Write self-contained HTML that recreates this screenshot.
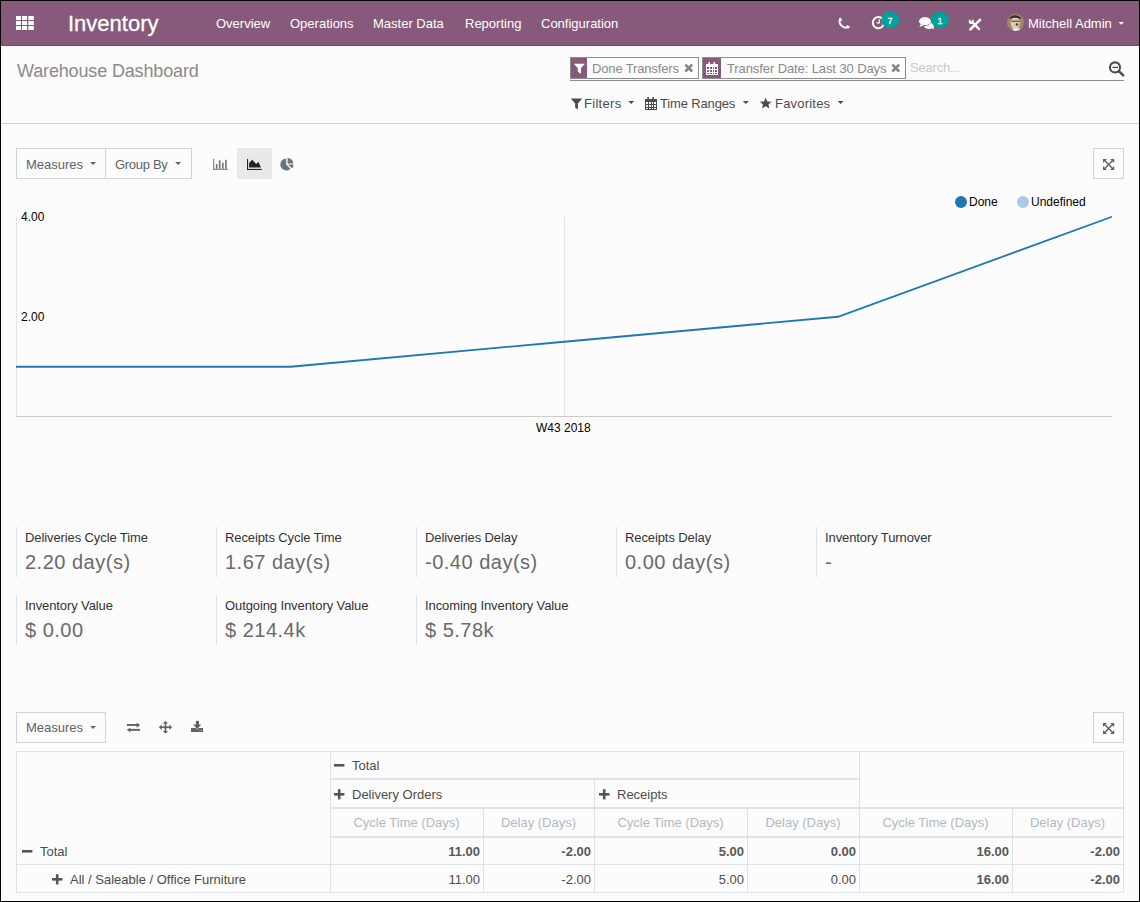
<!DOCTYPE html>
<html><head><meta charset="utf-8">
<style>
*{box-sizing:border-box;margin:0;padding:0}
html,body{width:1140px;height:902px;overflow:hidden;background:#fcfcfc}
body{font-family:"Liberation Sans",sans-serif;font-size:13px;color:#4c4c4c;position:relative}
.frame{position:absolute;left:0;top:0;width:1140px;height:902px;overflow:hidden}
.border{position:absolute;left:0;top:0;width:1140px;height:902px;border:1px solid #000;z-index:99}
.border2{position:absolute;left:1px;top:1px;width:1138px;height:900px;border:1px solid rgba(255,255,255,0.09);z-index:98}
.abs{position:absolute;white-space:nowrap}
.nav{position:absolute;left:0;top:0;width:1140px;height:46px;background:#875a7b;border-bottom:1px solid #6f4a66}
.nav .t{color:#fff;font-size:13px}
.cp{position:absolute;left:0;top:46px;width:1140px;height:78px;background:#fcfcfc;border-bottom:1px solid #cfcfcf}
svg{position:absolute;overflow:visible}
.btn{position:absolute;border:1px solid #ced4da;background:#fcfcfc;height:31px}
.kpi{position:absolute;width:200px;height:50px;border-left:1px solid #dde3ea}
.kpi .l{position:absolute;left:8px;top:3px;font-size:13px;color:#333;white-space:nowrap;letter-spacing:-0.1px}
.kpi .v{position:absolute;left:8px;top:24px;font-size:20px;color:#6a6a6a;white-space:nowrap;letter-spacing:0.5px}
</style></head>
<body>
<div class="frame">
  <!-- NAVBAR -->
  <div class="nav">
    <svg style="left:0;top:0" width="60" height="46">
      <g fill="#fff">
        <rect x="16" y="16" width="5" height="4"/><rect x="22" y="16" width="5.1" height="4"/><rect x="28.3" y="16" width="5.5" height="4"/>
        <rect x="16" y="21" width="5" height="4"/><rect x="22" y="21" width="5.1" height="4"/><rect x="28.3" y="21" width="5.5" height="4"/>
        <rect x="16" y="26" width="5" height="4"/><rect x="22" y="26" width="5.1" height="4"/><rect x="28.3" y="26" width="5.5" height="4"/>
      </g>
    </svg>
    <div class="abs t" style="left:68px;top:11px;font-size:22px;-webkit-text-stroke:0.3px #fff">Inventory</div>
    <div class="abs t" style="left:216px;top:16px">Overview</div>
    <div class="abs t" style="left:290px;top:16px">Operations</div>
    <div class="abs t" style="left:373px;top:16px">Master Data</div>
    <div class="abs t" style="left:465px;top:16px">Reporting</div>
    <div class="abs t" style="left:541px;top:16px">Configuration</div>
    <div class="abs t" style="left:1028px;top:16px">Mitchell Admin</div>

    <svg style="left:0;top:0" width="1140" height="46">
      <!-- phone -->
      <path d="M839.9,18.9 C839,22 839.8,25.4 843.8,27.1 C845.8,27.9 847.3,27.7 848.5,26.9" fill="none" stroke="#fff" stroke-width="1.9" stroke-linecap="round"/>
      <path d="M838.9,18.4 L840.6,17.4 L842.3,20.2 L840.4,21.6 Z" fill="#fff"/>
      <path d="M846.1,25.9 L847.6,24.9 L849.9,27.2 L848.3,28.4 Z" fill="#fff"/>
      <!-- clock -->
      <circle cx="878.4" cy="22.7" r="5.6" fill="none" stroke="#fff" stroke-width="2"/>
      <path d="M879.3,19.3 V22.9 H876.6" fill="none" stroke="#fff" stroke-width="1.1"/>
      <ellipse cx="890.3" cy="20" rx="8.9" ry="8.3" fill="#00a09d"/>
      <!-- chat -->
      <ellipse cx="929" cy="25.6" rx="5" ry="3.4" fill="#fff"/>
      <path d="M931,27.5 L934.2,29.6 L933.3,26.2 Z" fill="#fff"/>
      <ellipse cx="925" cy="21.2" rx="6.1" ry="4.3" fill="#fff" stroke="#875a7b" stroke-width="0.9"/>
      <path d="M920.6,24.2 L919.4,27 L923.6,25.2 Z" fill="#fff"/>
      <ellipse cx="925" cy="21.2" rx="5.7" ry="3.9" fill="#fff"/>
      <ellipse cx="940" cy="20" rx="8.9" ry="8.3" fill="#00a09d"/>
      <!-- tools -->
      <path d="M970.4,29.4 L980,19.9" stroke="#fff" stroke-width="2.7" stroke-linecap="round"/>
      <path d="M972.8,22.8 L979.1,29.1" stroke="#fff" stroke-width="2.2" stroke-linecap="round"/>
      <circle cx="971.3" cy="21.5" r="2.6" fill="#fff"/><path d="M970,18.2 L972.6,18.2 L972,21.3 L970.6,21.3 Z" fill="#875a7b"/>
      <!-- avatar -->
      <defs><clipPath id="avc"><circle cx="1015.5" cy="22.5" r="8.5"/></clipPath></defs>
      <g clip-path="url(#avc)">
        <rect x="1006" y="13" width="19" height="19" fill="#a3876a"/>
        <ellipse cx="1015.3" cy="23" rx="4.6" ry="6.5" fill="#dcc8bd"/>
        <path d="M1009.5,17.5 Q1015,13 1021,17.5 L1020.5,19 Q1015,16.5 1010,19 Z" fill="#3a2a25"/>
        <path d="M1011.5,21.2 H1019.5" stroke="#4a3030" stroke-width="1"/>
        <ellipse cx="1017" cy="24.5" rx="1.3" ry="1.2" fill="#6a3a3a"/>
        <ellipse cx="1016.5" cy="30" rx="4" ry="2" fill="#e6e6ea"/>
      </g>
      <!-- caret -->
      <path d="M1118.5,22 H1124 L1121.25,24.8 Z" fill="#fff"/>
    </svg>
    <div class="abs" style="left:887.5px;top:15.5px;font-size:9px;color:#fff;-webkit-text-stroke:0.3px #fff">7</div>
    <div class="abs" style="left:937.5px;top:15.5px;font-size:9px;color:#fff;-webkit-text-stroke:0.3px #fff">1</div>
  </div>
  <!-- CONTROL PANEL -->
  <div class="cp">
    <div class="abs" style="left:17px;top:15px;font-size:18px;color:#8a8a8a;letter-spacing:-0.15px">Warehouse Dashboard</div>
  </div>

  <!-- facets (page coords) -->
  <div class="abs" style="left:570px;top:57px;width:129px;height:22px;border:1px solid #8c8c8c;background:#fcfcfc"></div>
  <div class="abs" style="left:571px;top:58px;width:16px;height:20px;background:#875a7b"></div>
  <div class="abs" style="left:592px;top:61px;color:#8a8a8a;font-size:13px;letter-spacing:-0.15px">Done Transfers</div>
  <div class="abs" style="left:702px;top:57px;width:204px;height:22px;border:1px solid #8c8c8c;background:#fcfcfc"></div>
  <div class="abs" style="left:703px;top:58px;width:18px;height:20px;background:#875a7b"></div>
  <div class="abs" style="left:727px;top:61px;color:#8a8a8a;font-size:13px;letter-spacing:-0.1px">Transfer Date: Last 30 Days</div>
  <div class="abs" style="left:910px;top:60px;color:#c8c8c8;font-size:13px;letter-spacing:-0.2px">Search...</div>
  <div class="abs" style="left:570px;top:80px;width:554px;height:1px;background:#8c8c8c"></div>
  <svg style="left:0;top:0" width="1140" height="130">
    <!-- filter icon in facet 1 -->
    <path d="M573.7,63.7 H585 L581,68 V74 L577.8,71.5 V68 Z" fill="#fff"/>
    <!-- x icons -->
    <path d="M685.3,64.6 L692.2,71.5 M692.2,64.6 L685.3,71.5" stroke="#858585" stroke-width="2.6"/>
    <path d="M892.3,64.6 L899.2,71.5 M899.2,64.6 L892.3,71.5" stroke="#858585" stroke-width="2.6"/>
    <!-- calendar in facet 2 -->
    <rect x="706" y="64" width="12" height="11" fill="#fff"/>
    <g fill="#875a7b">
      <rect x="707" y="67" width="2" height="2"/><rect x="710" y="67" width="2" height="2"/><rect x="713" y="67" width="1" height="2"/><rect x="715" y="67" width="2" height="2"/>
      <rect x="707" y="70" width="2" height="2"/><rect x="710" y="70" width="2" height="2"/><rect x="713" y="70" width="1" height="2"/><rect x="715" y="70" width="2" height="2"/>
      <rect x="707" y="73" width="2" height="1"/><rect x="710" y="73" width="2" height="1"/><rect x="713" y="73" width="1" height="1"/><rect x="715" y="73" width="2" height="1"/>
    </g>
    <g fill="#fff"><rect x="708.5" y="62" width="1.6" height="2.5"/><rect x="713.5" y="62" width="1.6" height="2.5"/></g>
    <!-- search minus icon -->
    <circle cx="1115" cy="67.4" r="5" fill="none" stroke="#4c4c4c" stroke-width="2.1"/>
    <path d="M1118.8,71.2 L1123.2,75.4" stroke="#4c4c4c" stroke-width="2.5" stroke-linecap="round"/>
    <path d="M1112.4,67.4 H1118" stroke="#4c4c4c" stroke-width="1.3"/>
    <!-- filters row icons -->
    <path d="M570.8,98.6 H582.2 L577.9,103.6 V109.5 L575.1,107.5 V103.6 Z" fill="#4c4c4c"/>
    <path d="M628.2,100.9 H634.2 L631.2,103.9 Z" fill="#4c4c4c"/>
    <rect x="645" y="99" width="12" height="11" fill="#4c4c4c"/>
    <g fill="#fcfcfc">
      <rect x="646" y="102" width="2" height="2"/><rect x="649" y="102" width="2" height="2"/><rect x="652" y="102" width="1" height="2"/><rect x="654" y="102" width="2" height="2"/>
      <rect x="646" y="105" width="2" height="2"/><rect x="649" y="105" width="2" height="2"/><rect x="652" y="105" width="1" height="2"/><rect x="654" y="105" width="2" height="2"/>
      <rect x="646" y="108" width="2" height="1"/><rect x="649" y="108" width="2" height="1"/><rect x="652" y="108" width="1" height="1"/><rect x="654" y="108" width="2" height="1"/>
    </g>
    <g fill="#4c4c4c"><rect x="647.3" y="97" width="1.6" height="2.5"/><rect x="652.3" y="97" width="1.6" height="2.5"/></g>
    <path d="M742.8,100.9 H748.8 L745.8,103.9 Z" fill="#4c4c4c"/>
    <path d="M765.7,97.6 L767.3,101.4 L771.6,101.7 L768.4,104.4 L769.4,108.6 L765.7,106.3 L762,108.6 L763,104.4 L759.8,101.7 L764.1,101.4 Z" fill="#4c4c4c"/>
    <path d="M837.6,100.9 H843.6 L840.6,103.9 Z" fill="#4c4c4c"/>
  </svg>
  <div class="abs" style="left:584px;top:96px;font-size:13px;color:#4c4c4c;letter-spacing:0.3px">Filters</div>
  <div class="abs" style="left:660px;top:96px;font-size:13px;color:#4c4c4c;letter-spacing:-0.15px">Time Ranges</div>
  <div class="abs" style="left:775px;top:96px;font-size:13px;color:#4c4c4c;letter-spacing:0.2px">Favorites</div>

  <!-- CHART SECTION -->
  <div class="btn" style="left:16px;top:148px;width:90px;height:31px"></div>
  <div class="btn" style="left:105px;top:148px;width:87px;height:31px"></div>
  <div class="abs" style="left:26px;top:157px;font-size:13px;color:#5f6368">Measures</div>
  <div class="abs" style="left:115px;top:157px;font-size:13px;color:#5f6368;letter-spacing:-0.3px">Group By</div>
  <div class="abs" style="left:237px;top:148px;width:35px;height:31px;background:#e9e9e9"></div>
  <div class="btn" style="left:1093px;top:148px;width:31px;height:31px"></div>
  <svg style="left:0;top:0" width="1140" height="902">
    <path d="M90.2,162.1 H96 L93.1,165 Z" fill="#5f6368"/>
    <path d="M175.2,162.1 H181 L178.1,165 Z" fill="#5f6368"/>
    <!-- bar chart icon -->
    <g fill="#6c757d">
      <rect x="213.2" y="158.8" width="1" height="11"/><rect x="213.2" y="168.8" width="14.8" height="1"/>
      <rect x="215.9" y="164.1" width="1.6" height="4.7"/><rect x="218.9" y="160.3" width="1.6" height="8.5"/><rect x="222" y="162.7" width="1.6" height="6.1"/><rect x="225.1" y="159.8" width="1.6" height="9"/>
    </g>
    <!-- area chart icon -->
    <g fill="#212529">
      <rect x="247" y="158.9" width="1.1" height="11.1"/><rect x="247" y="168.9" width="14.8" height="1.1"/>
      <path d="M249.1,167.6 V162.9 L252.2,159.8 L256.2,164 L258.5,161.8 L260.9,167.6 Z"/>
    </g>
    <!-- pie icon -->
    <path d="M286.2,158.6 A5.9,5.9 0 1 0 290.4,168.7 L286.2,164.5 Z" fill="#6c757d"/>
    <path d="M287.6,157.9 A5.6,5.6 0 0 1 293.2,163.5 L287.6,163.5 Z" fill="#6c757d"/>
    <path d="M293.6,164.6 A5.6,5.6 0 0 1 292.1,168.4 L288.1,164.6 Z" fill="#6c757d"/>
    <!-- expand icon -->
    <g fill="none" stroke="#5f6368" stroke-width="1.4">
      <path d="M1104.2,160.1 L1113,168.9 M1113,160.1 L1104.2,168.9"/>
    </g>
    <g fill="#5f6368">
      <path d="M1103,158.9 H1107 L1103,162.9 Z"/><path d="M1114.2,158.9 H1110.2 L1114.2,162.9 Z"/>
      <path d="M1103,170.1 H1107 L1103,166.1 Z"/><path d="M1114.2,170.1 H1110.2 L1114.2,166.1 Z"/>
    </g>
    <!-- legend -->
    <circle cx="961" cy="202" r="5" fill="#1f77b4" stroke="#1f77b4" stroke-width="2"/>
    <circle cx="1023" cy="202" r="5" fill="#aec7e8" stroke="#aec7e8" stroke-width="2"/>
    <!-- axes -->
    <rect x="16" y="216.5" width="1" height="200" fill="#e5e5e5"/>
    <rect x="564" y="216.5" width="1" height="200" fill="#e5e5e5"/>
    <rect x="16" y="416" width="1096" height="1" fill="#cccccc"/>
    <polyline points="16,366.75 290.5,366.75 564.3,341.75 838,316.75 1112,216.75" fill="none" stroke="#1f77b4" stroke-width="1.8"/>
  </svg>
  <div class="abs" style="left:969px;top:195px;font-size:12px;color:#000">Done</div>
  <div class="abs" style="left:1031px;top:195px;font-size:12px;color:#000">Undefined</div>
  <div class="abs" style="left:21px;top:210px;font-size:12px;color:#000">4.00</div>
  <div class="abs" style="left:21px;top:310px;font-size:12px;color:#000">2.00</div>
  <div class="abs" style="left:536px;top:421px;font-size:12px;color:#000">W43 2018</div>

  <!-- KPIs -->
  <div class="kpi" style="left:16px;top:527px"><div class="l">Deliveries Cycle Time</div><div class="v">2.20 day(s)</div></div>
  <div class="kpi" style="left:216px;top:527px"><div class="l">Receipts Cycle Time</div><div class="v">1.67 day(s)</div></div>
  <div class="kpi" style="left:416px;top:527px"><div class="l">Deliveries Delay</div><div class="v">-0.40 day(s)</div></div>
  <div class="kpi" style="left:616px;top:527px"><div class="l">Receipts Delay</div><div class="v">0.00 day(s)</div></div>
  <div class="kpi" style="left:816px;top:527px"><div class="l">Inventory Turnover</div><div class="v">-</div></div>
  <div class="kpi" style="left:16px;top:595px"><div class="l">Inventory Value</div><div class="v">$ 0.00</div></div>
  <div class="kpi" style="left:216px;top:595px"><div class="l">Outgoing Inventory Value</div><div class="v">$ 214.4k</div></div>
  <div class="kpi" style="left:416px;top:595px"><div class="l">Incoming Inventory Value</div><div class="v">$ 5.78k</div></div>

  <!-- PIVOT -->
  <div class="btn" style="left:16px;top:712px;width:90px;height:31px"></div>
  <div class="abs" style="left:26px;top:720px;font-size:13px;color:#5f6368">Measures</div>
  <div class="btn" style="left:1093px;top:712px;width:31px;height:31px"></div>
  <div class="abs" style="left:16px;top:751px;width:1108px;height:142px;background:#fcfcfc"></div>
  <div class="abs" style="left:16px;top:751px;width:1108px;height:1px;background:#dee2e6"></div>
  <div class="abs" style="left:330px;top:778px;width:530px;height:2px;background:#dee2e6"></div>
  <div class="abs" style="left:859px;top:807px;width:265px;height:2px;background:#dee2e6"></div>
  <div class="abs" style="left:330px;top:807px;width:530px;height:2px;background:#dee2e6"></div>
  <div class="abs" style="left:330px;top:836px;width:794px;height:2px;background:#dee2e6"></div>
  <div class="abs" style="left:16px;top:864px;width:1108px;height:1px;background:#dee2e6"></div>
  <div class="abs" style="left:16px;top:892px;width:1108px;height:1px;background:#dee2e6"></div>
  <div class="abs" style="left:16px;top:751px;width:1px;height:142px;background:#dee2e6"></div>
  <div class="abs" style="left:330px;top:751px;width:1px;height:142px;background:#dee2e6"></div>
  <div class="abs" style="left:859px;top:751px;width:1px;height:142px;background:#dee2e6"></div>
  <div class="abs" style="left:1123px;top:751px;width:1px;height:142px;background:#dee2e6"></div>
  <div class="abs" style="left:594px;top:779px;width:1px;height:114px;background:#dee2e6"></div>
  <div class="abs" style="left:483px;top:808px;width:1px;height:85px;background:#dee2e6"></div>
  <div class="abs" style="left:747px;top:808px;width:1px;height:85px;background:#dee2e6"></div>
  <div class="abs" style="left:1012px;top:808px;width:1px;height:85px;background:#dee2e6"></div>
  <div class="abs" style="left:352px;top:758px;">Total</div>
  <div class="abs" style="left:352px;top:787px;">Delivery Orders</div>
  <div class="abs" style="left:617px;top:787px;">Receipts</div>
  <div class="abs" style="left:40px;top:844px;">Total</div>
  <div class="abs" style="left:70px;top:872px;">All / Saleable / Office Furniture</div>
  <div class="abs" style="left:330px;top:815px;width:153px;text-align:center;color:#b3b9c0">Cycle Time (Days)</div>
  <div class="abs" style="left:483px;top:815px;width:111px;text-align:center;color:#b3b9c0">Delay (Days)</div>
  <div class="abs" style="left:594px;top:815px;width:153px;text-align:center;color:#b3b9c0">Cycle Time (Days)</div>
  <div class="abs" style="left:747px;top:815px;width:112px;text-align:center;color:#b3b9c0">Delay (Days)</div>
  <div class="abs" style="left:859px;top:815px;width:153px;text-align:center;color:#b3b9c0">Cycle Time (Days)</div>
  <div class="abs" style="left:1012px;top:815px;width:111px;text-align:center;color:#b3b9c0">Delay (Days)</div>
  <div class="abs" style="left:364px;top:844px;width:116px;text-align:right;font-weight:bold;color:#585858">11.00</div>
  <div class="abs" style="left:364px;top:872px;width:116px;text-align:right">11.00</div>
  <div class="abs" style="left:475px;top:844px;width:116px;text-align:right;font-weight:bold;color:#585858">-2.00</div>
  <div class="abs" style="left:475px;top:872px;width:116px;text-align:right">-2.00</div>
  <div class="abs" style="left:628px;top:844px;width:116px;text-align:right;font-weight:bold;color:#585858">5.00</div>
  <div class="abs" style="left:628px;top:872px;width:116px;text-align:right">5.00</div>
  <div class="abs" style="left:740px;top:844px;width:116px;text-align:right;font-weight:bold;color:#585858">0.00</div>
  <div class="abs" style="left:740px;top:872px;width:116px;text-align:right">0.00</div>
  <div class="abs" style="left:893px;top:844px;width:116px;text-align:right;font-weight:bold;color:#585858">16.00</div>
  <div class="abs" style="left:893px;top:872px;width:116px;text-align:right;font-weight:bold;color:#585858">16.00</div>
  <div class="abs" style="left:1004px;top:844px;width:116px;text-align:right;font-weight:bold;color:#585858">-2.00</div>
  <div class="abs" style="left:1004px;top:872px;width:116px;text-align:right;font-weight:bold;color:#585858">-2.00</div>
  <svg style="left:0;top:0" width="1140" height="902">
    <rect x="334" y="764" width="10.4" height="2.6" fill="#555"/>
    <rect x="334" y="793" width="10.4" height="2.6" fill="#555"/><rect x="337.9" y="789.2" width="2.6" height="10.2" fill="#555"/>
    <rect x="599" y="793" width="10.4" height="2.6" fill="#555"/><rect x="602.9" y="789.2" width="2.6" height="10.2" fill="#555"/>
    <rect x="22" y="850" width="10.4" height="2.6" fill="#555"/>
    <rect x="52" y="878" width="10.4" height="2.6" fill="#555"/><rect x="55.9" y="874.2" width="2.6" height="10.2" fill="#555"/>
    <path d="M90.2,726.1 H96 L93.1,729 Z" fill="#5f6368"/>
    <!-- swap -->
    <g fill="#5f6368">
      <rect x="126.9" y="724" width="10.5" height="1.9"/><path d="M136.6,722.8 L140.2,724.95 L136.6,727.7 Z"/>
      <rect x="129.6" y="728.9" width="10.5" height="1.9"/><path d="M130.4,727.8 L126.8,729.85 L130.4,732.6 Z"/>
    </g>
    <!-- move -->
    <g fill="#5f6368">
      <rect x="160" y="726.4" width="11" height="1.7"/><rect x="164.6" y="722" width="1.7" height="10.6"/>
      <path d="M158.9,727.25 L161.6,724.6 V729.9 Z"/><path d="M172.1,727.25 L169.4,724.6 V729.9 Z"/>
      <path d="M165.45,720.9 L162.8,723.6 H168.1 Z"/><path d="M165.45,733.6 L162.8,730.9 H168.1 Z"/>
    </g>
    <!-- download -->
    <g fill="#5f6368">
      <rect x="195.9" y="720.9" width="3.1" height="4.2"/>
      <path d="M193.2,724.6 H201.2 L197.2,729.2 Z"/>
      <path d="M191,728 H195.6 L197.2,729.8 L198.8,728 H203 V731.9 H191 Z"/>
    </g>
    <rect x="199.6" y="729.9" width="0.8" height="0.8" fill="#c8c8c8"/><rect x="201.2" y="729.9" width="0.8" height="0.8" fill="#c8c8c8"/>
    <!-- pivot expand icon -->
    <g fill="none" stroke="#5f6368" stroke-width="1.4">
      <path d="M1104.2,724.1 L1113,732.9 M1113,724.1 L1104.2,732.9"/>
    </g>
    <g fill="#5f6368">
      <path d="M1103,722.9 H1107 L1103,726.9 Z"/><path d="M1114.2,722.9 H1110.2 L1114.2,726.9 Z"/>
      <path d="M1103,734.1 H1107 L1103,730.1 Z"/><path d="M1114.2,734.1 H1110.2 L1114.2,730.1 Z"/>
    </g>
  </svg>
</div>

<div class="border"></div>
</body></html>
